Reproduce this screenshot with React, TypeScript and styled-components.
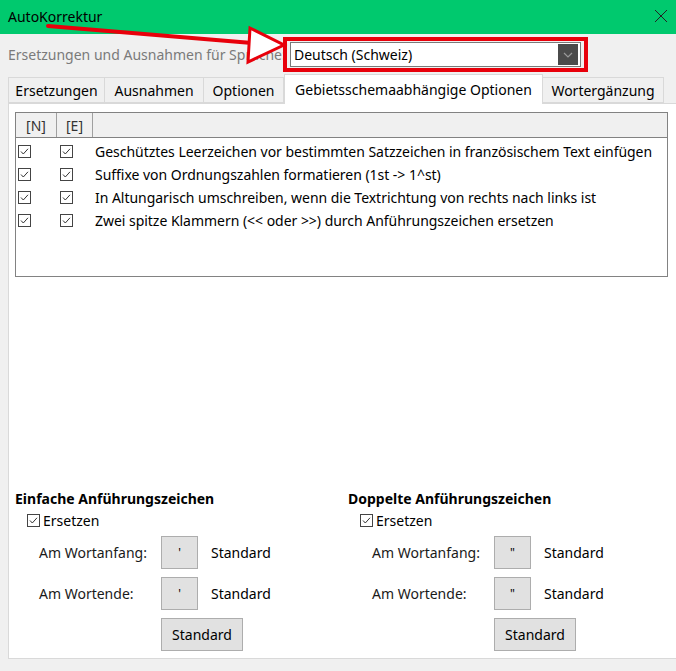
import React from 'react';
import styled, { createGlobalStyle } from 'styled-components';

const GlobalStyle = createGlobalStyle`
  html, body {
    margin: 0;
    padding: 0;
    background: #f0f0f0;
  }
  body {
    font-family: 'Noto Sans', 'Open Sans', sans-serif;
    font-size: 14px;
    color: #000;
  }
`;

const Window = styled.div`
  position: relative;
  width: 676px;
  height: 671px;
  overflow: hidden;
  display: flex;
  flex-direction: column;
  background: #f0f0f0;
`;

const TitleBar = styled.div`
  height: 34px;
  flex: none;
  display: flex;
  align-items: center;
  justify-content: space-between;
  padding: 0 8px 2px;
  box-sizing: border-box;
  background: #00c96e;
  font-size: 14px;
`;

const LangRow = styled.div`
  height: 41px;
  flex: none;
  display: flex;
  align-items: center;
  padding-left: 8px;
  gap: 5px;
`;

const LangLabel = styled.span`
  color: #7a7a7a;
  width: 270px;
  white-space: nowrap;
`;

const RedFrame = styled.div`
  border: 4px solid #e8000b;
  padding: 1px 3px;
  display: flex;
`;

const Combo = styled.div`
  width: 291px;
  height: 25px;
  box-sizing: border-box;
  background: #fff;
  border: 1px solid #7a7a7a;
  display: flex;
  align-items: center;
  justify-content: space-between;
  padding-left: 3px;
  padding-right: 2px;
`;

const DropButton = styled.div`
  width: 20px;
  height: 21px;
  background: #4b4b4b;
  display: flex;
  align-items: center;
  justify-content: center;
`;

const TabBar = styled.div`
  display: flex;
  align-items: flex-end;
  padding-left: 8px;
  height: 28px;
  flex: none;
  position: relative;
  z-index: 1;
`;

const Tab = styled.div<{ $w: number; $active?: boolean }>`
  width: ${(p) => p.$w}px;
  box-sizing: border-box;
  height: ${(p) => (p.$active ? 30 : 26)}px;
  margin-bottom: ${(p) => (p.$active ? -1 : 0)}px;
  display: flex;
  align-items: center;
  justify-content: center;
  white-space: nowrap;
  background: ${(p) => (p.$active ? '#fff' : '#f0f0f0')};
  border: 1px solid #d9d9d9;
  border-bottom: ${(p) => (p.$active ? 'none' : '1px solid #d9d9d9')};
  border-left: ${(p) => (p.$active ? '1px solid #d9d9d9' : 'none')};
  &:first-child {
    border-left: 1px solid #d9d9d9;
  }
`;

const Panel = styled.div`
  flex: 1;
  margin: 0 -4px 12px 8px;
  background: #fff;
  border: 1px solid #d9d9d9;
  display: flex;
  flex-direction: column;
  padding: 8px 0 0 6px;
`;

const ListBox = styled.div`
  width: 653px;
  height: 165px;
  box-sizing: border-box;
  border: 1px solid #828282;
  display: flex;
  flex-direction: column;
`;

const HeaderRow = styled.div`
  display: flex;
  height: 24px;
  flex: none;
  background: #f0f0f0;
  border-bottom: 1px solid #828282;
`;

const HeaderCell = styled.div<{ $w?: number }>`
  width: ${(p) => (p.$w ? `${p.$w}px` : 'auto')};
  flex: ${(p) => (p.$w ? 'none' : '1')};
  box-sizing: border-box;
  border-right: ${(p) => (p.$w ? '1px solid #a0a0a0' : 'none')};
  display: flex;
  align-items: center;
  justify-content: center;
  color: #333;
`;

const Rows = styled.div`
  padding-top: 2px;
`;

const Row = styled.div`
  height: 23px;
  display: flex;
  align-items: center;
`;

const CheckCell = styled.div<{ $w: number }>`
  width: ${(p) => p.$w}px;
  flex: none;
  display: flex;
  align-items: center;
  padding-left: 2px;
`;

const RowText = styled.span`
  white-space: nowrap;
  letter-spacing: -0.03px;
`;

const Spacer = styled.div`
  flex: 1;
`;

const QuoteArea = styled.div`
  display: grid;
  grid-template-columns: 333px 1fr;
  padding-bottom: 7px;
`;

const Group = styled.div`
  display: flex;
  flex-direction: column;
`;

const GroupTitle = styled.div`
  font-weight: 700;
  height: 20px;
  line-height: 20px;
  margin-bottom: 1px;
`;

const CheckLine = styled.label`
  display: flex;
  align-items: center;
  gap: 3px;
  padding-left: 12px;
  height: 20px;
  margin-bottom: 6px;
`;

const FieldRow = styled.div`
  display: flex;
  align-items: center;
  padding-left: 24px;
  height: 33px;
  margin-bottom: 8px;
`;

const FieldLabel = styled.span`
  width: 122px;
  flex: none;
  color: #1a1a1a;
`;

const CharButton = styled.div`
  width: 37px;
  height: 33px;
  box-sizing: border-box;
  background: #e1e1e1;
  border: 1px solid #adadad;
  display: flex;
  align-items: flex-start;
  justify-content: center;
  padding-top: 7px;
  font-size: 12px;
  margin-right: 13px;
`;

const StdButton = styled.div`
  margin-left: 146px;
  width: 82px;
  height: 33px;
  box-sizing: border-box;
  background: #e1e1e1;
  border: 1px solid #adadad;
  display: flex;
  align-items: center;
  justify-content: center;
`;

const Overlay = styled.svg`
  position: absolute;
  left: 0;
  top: 0;
  pointer-events: none;
`;

function CheckBox() {
  return (
    <svg width="13" height="13" viewBox="0 0 13 13">
      <rect x="0.5" y="0.5" width="12" height="12" fill="#fff" stroke="#444" />
      <polyline points="3,6.5 5.3,9 10,3.8" fill="none" stroke="#333" strokeWidth="1" />
    </svg>
  );
}

const rows = [
  'Geschütztes Leerzeichen vor bestimmten Satzzeichen in französischem Text einfügen',
  'Suffixe von Ordnungszahlen formatieren (1st -> 1^st)',
  'In Altungarisch umschreiben, wenn die Textrichtung von rechts nach links ist',
  'Zwei spitze Klammern (<< oder >>) durch Anführungszeichen ersetzen',
];

const tabs = [
  { label: 'Ersetzungen', w: 97 },
  { label: 'Ausnahmen', w: 99 },
  { label: 'Optionen', w: 80 },
  { label: 'Gebietsschemaabhängige Optionen', w: 259, active: true },
  { label: 'Wortergänzung', w: 121 },
];

function QuoteGroup({ title, mark }: { title: string; mark: string }) {
  return (
    <Group>
      <GroupTitle>{title}</GroupTitle>
      <CheckLine>
        <CheckBox />
        Ersetzen
      </CheckLine>
      <FieldRow>
        <FieldLabel>Am Wortanfang:</FieldLabel>
        <CharButton>{mark}</CharButton>
        <span>Standard</span>
      </FieldRow>
      <FieldRow>
        <FieldLabel>Am Wortende:</FieldLabel>
        <CharButton>{mark}</CharButton>
        <span>Standard</span>
      </FieldRow>
      <StdButton>Standard</StdButton>
    </Group>
  );
}

export default function App() {
  return (
    <Window>
      <GlobalStyle />
      <TitleBar>
        <span>AutoKorrektur</span>
        <svg width="14" height="14" viewBox="0 0 14 14">
          <path d="M1 1 L13 13 M13 1 L1 13" stroke="#222" strokeWidth="1" />
        </svg>
      </TitleBar>
      <LangRow>
        <LangLabel>Ersetzungen und Ausnahmen für Sprache:</LangLabel>
        <RedFrame>
          <Combo>
            <span>Deutsch (Schweiz)</span>
            <DropButton>
              <svg width="10" height="6" viewBox="0 0 10 6">
                <polyline points="1,1 5,5 9,1" fill="none" stroke="#9a9a9a" strokeWidth="1.2" />
              </svg>
            </DropButton>
          </Combo>
        </RedFrame>
      </LangRow>
      <TabBar>
        {tabs.map((t) => (
          <Tab key={t.label} $w={t.w} $active={t.active}>
            {t.label}
          </Tab>
        ))}
      </TabBar>
      <Panel>
        <ListBox>
          <HeaderRow>
            <HeaderCell $w={41}>[N]</HeaderCell>
            <HeaderCell $w={36}>[E]</HeaderCell>
            <HeaderCell />
          </HeaderRow>
          <Rows>
            {rows.map((r) => (
              <Row key={r}>
                <CheckCell $w={40}>
                  <CheckBox />
                </CheckCell>
                <CheckCell $w={35}>
                  <CheckBox />
                </CheckCell>
                <RowText>{r}</RowText>
              </Row>
            ))}
          </Rows>
        </ListBox>
        <Spacer />
        <QuoteArea>
          <QuoteGroup title="Einfache Anführungszeichen" mark="'" />
          <QuoteGroup title="Doppelte Anführungszeichen" mark={'"'} />
        </QuoteArea>
      </Panel>
      <Overlay width="676" height="80" viewBox="0 0 676 80">
        <line x1="48" y1="26" x2="252" y2="43" stroke="#e8000b" strokeWidth="4" strokeLinecap="round" />
        <polygon points="250,28 284,45 248,62" fill="#fff" stroke="#e8000b" strokeWidth="3" strokeLinejoin="miter" />
      </Overlay>
    </Window>
  );
}
